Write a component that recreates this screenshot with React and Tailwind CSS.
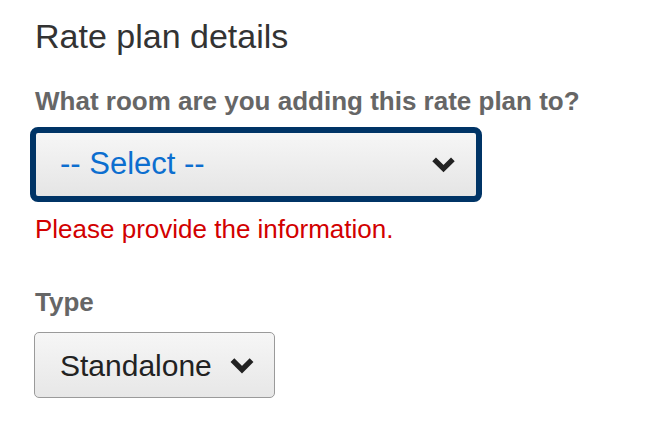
import React from 'react'

const Chevron = ({ className }) => (
  <svg viewBox="0 0 24 16" className={className} fill="none">
    <path d="M3 3l9 9 9-9" stroke="currentColor" strokeWidth="5" strokeLinejoin="miter" />
  </svg>
)

const App = () => {
  return (
    <div className="min-h-[438px] w-[672px] bg-white px-[35px] pt-[16px] font-['Liberation_Sans',Arial,sans-serif]">
      <h2 className="text-[34px] leading-[40px] text-[#333]">Rate plan details</h2>

      <div className="mt-[30px]">
        <label className="block text-[26px] leading-[30px] font-bold text-[#666]">
          What room are you adding this rate plan to?
        </label>
        <div className="mt-[11px] -ml-[5px] flex h-[75px] w-[452px] items-center justify-between rounded-[8px] border-[6px] border-[#003466] bg-gradient-to-b from-[#f6f6f6] to-[#e5e5e5] pl-[24px] pr-[20px]">
          <span className="text-[31px] text-[#0c6ecf]">-- Select --</span>
          <Chevron className="h-[17px] w-[25px] text-[#222]" />
        </div>
        <p className="mt-[12px] text-[26px] leading-[30px] text-[#d20000]">Please provide the information.</p>
      </div>

      <div className="mt-[43px]">
        <label className="block text-[26px] leading-[30px] font-bold text-[#666]">Type</label>
        <div className="mt-[15px] -ml-[1px] flex h-[66px] w-[241px] items-center justify-between rounded-[5px] border border-[#9a9a9a] bg-gradient-to-b from-[#f6f6f6] to-[#e7e7e7] pl-[25px] pr-[19px]">
          <span className="text-[30px] text-[#222]">Standalone</span>
          <Chevron className="h-[17px] w-[26px] text-[#222]" />
        </div>
      </div>
    </div>
  )
}

export default App
